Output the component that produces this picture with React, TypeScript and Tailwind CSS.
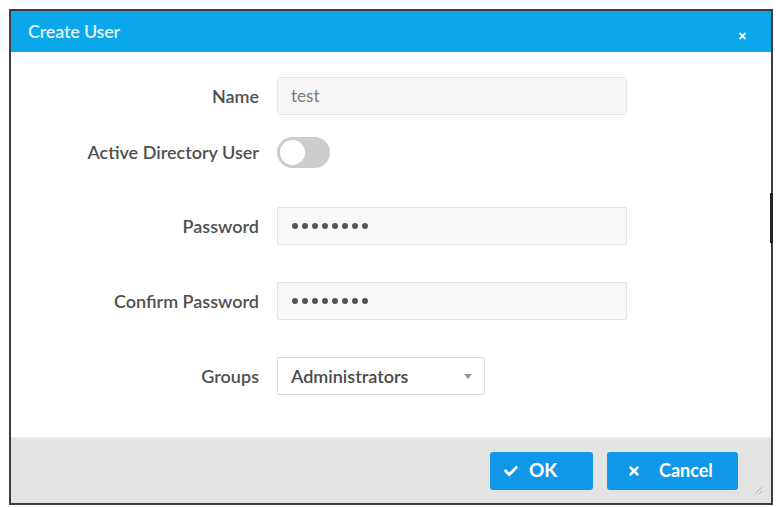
import React from "react";
import { FaCheck, FaTimes } from "react-icons/fa";

const font = { fontFamily: "Lato, 'Open Sans', 'Liberation Sans', sans-serif" };

function Label({ children }: { children: React.ReactNode }) {
  return (
    <div className="w-[248px] shrink-0 text-right text-[18px] font-semibold text-[#505050]">
      {children}
    </div>
  );
}

function Row({
  label,
  className,
  children,
}: {
  label: string;
  className: string;
  children: React.ReactNode;
}) {
  return (
    <div className={`flex items-center gap-[18px] ${className}`}>
      <Label>{label}</Label>
      {children}
    </div>
  );
}

function Dots() {
  return (
    <div className="flex items-center gap-[4px]">
      {[0, 1, 2, 3, 4, 5, 6, 7].map((i) => (
        <span key={i} className="w-[6px] h-[6px] rounded-full bg-[#555]" />
      ))}
    </div>
  );
}

export default function App() {
  return (
    <div className="w-[776px] h-[507px] bg-white overflow-hidden" style={font}>
      <div className="relative ml-[9px] mt-[9px] w-[764px] h-[496px] border-2 border-[#3d3d3d] flex flex-col bg-white">
        {/* title bar */}
        <div className="h-[41px] shrink-0 bg-[#0aa7ea] flex items-center justify-between pl-[17px] pr-[24px]">
          <span className="text-[18px] font-semibold tracking-[-0.2px] text-[#dff3fd]">Create User</span>
          <FaTimes className="text-white w-[9px] h-[10px] mt-[8px]" />
        </div>

        {/* form */}
        <div className="flex-1 flex flex-col">
          <Row label="Name" className="mt-[25px] h-[38px]">
            <div className="w-[350px] h-[38px] border border-[#e6e6e6] bg-[#f7f7f7] rounded-[2px] flex items-center px-[13px] text-[17px] text-[#7a7a7a]">
              test
            </div>
          </Row>

          <Row label="Active Directory User" className="mt-[22px] h-[31px]">
            <div className="w-[53px] h-[31px] rounded-full bg-[#cdcdcd] flex items-center px-[3px]">
              <div className="w-[25px] h-[25px] rounded-full bg-white" />
            </div>
          </Row>

          <Row label="Password" className="mt-[39px] h-[38px]">
            <div className="w-[350px] h-[38px] border border-[#e3e3e3] bg-[#f9f9f9] rounded-[2px] flex items-center px-[14px]">
              <Dots />
            </div>
          </Row>

          <Row label="Confirm Password" className="mt-[37px] h-[38px]">
            <div className="w-[350px] h-[38px] border border-[#e3e3e3] bg-[#f9f9f9] rounded-[2px] flex items-center px-[14px]">
              <Dots />
            </div>
          </Row>

          <Row label="Groups" className="mt-[37px] h-[38px]">
            <div className="w-[208px] h-[38px] border border-[#dcdcdc] bg-white rounded-[2px] flex items-center justify-between pl-[13px] pr-[12px] text-[18px] font-semibold text-[#4a4a4a]">
              <span>Administrators</span>
              <svg width="8" height="5" viewBox="0 0 8 5">
                <path d="M0 0 L8 0 L4 5 Z" fill="#9a9a9a" />
              </svg>
            </div>
          </Row>
        </div>

        {/* footer */}
        <div className="h-[66px] shrink-0 bg-[#e4e4e4] border-t border-[#eeeeee] flex items-center justify-end gap-[14px] pr-[33px]">
          <button className="w-[103px] h-[38px] rounded-[3px] bg-[#1197e8] text-white text-[19px] font-bold flex items-center pl-[14px] gap-[11px]">
            <FaCheck className="w-[14px] h-[14px]" />
            <span>OK</span>
          </button>
          <button className="w-[131px] h-[38px] rounded-[3px] bg-[#1197e8] text-white text-[18px] font-bold flex items-center pl-[21px] gap-[19px]">
            <FaTimes className="w-[12px] h-[14px]" />
            <span>Cancel</span>
          </button>
        </div>

        {/* scroll thumb on the right edge */}
        <div className="absolute right-[-2px] top-[182px] w-[3px] h-[50px] bg-[#222]" />

        {/* resize grip */}
        <svg className="absolute right-[8px] bottom-[8px]" width="9" height="9" viewBox="0 0 9 9">
          <path d="M8 1 L1 8 M8 5 L5 8" stroke="#b5b5b5" strokeWidth="1" />
        </svg>
      </div>
    </div>
  );
}
